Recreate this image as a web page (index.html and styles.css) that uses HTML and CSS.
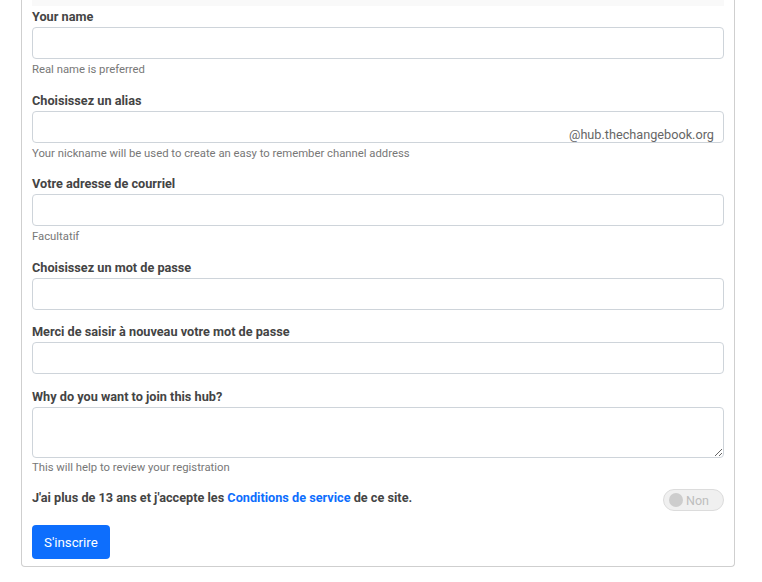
FILE: index.html
```html
<!DOCTYPE html>
<html lang="fr">
<head>
    <meta charset="UTF-8">
    <title>Inscription</title>
    <link rel="stylesheet" href="styles.css">
</head>
<body>
    <div class="container">
        <div class="section-band"></div>
        <form class="register">
            <div class="form-group">
                <label for="name">Your name</label>
                <input type="text" id="name">
                <div class="help">Real name is preferred</div>
            </div>

            <div class="form-group">
                <label for="nick">Choisissez un alias</label>
                <div class="input-wrap">
                    <input type="text" id="nick">
                    <span class="domain">@hub.thechangebook.org</span>
                </div>
                <div class="help">Your nickname will be used to create an easy to remember channel address</div>
            </div>

            <div class="form-group">
                <label for="email">Votre adresse de courriel</label>
                <input type="text" id="email">
                <div class="help">Facultatif</div>
            </div>

            <div class="form-group">
                <label for="pass1">Choisissez un mot de passe</label>
                <input type="password" id="pass1">
            </div>

            <div class="form-group">
                <label for="pass2">Merci de saisir à nouveau votre mot de passe</label>
                <input type="password" id="pass2">
            </div>

            <div class="form-group">
                <label for="why">Why do you want to join this hub?</label>
                <textarea id="why"></textarea>
                <div class="help help-last">This will help to review your registration</div>
            </div>

            <div class="tos">
                <span class="tos-text">J'ai plus de 13 ans et j'accepte les <a href="#">Conditions de service</a> de ce site.</span>
                <span class="toggle"><span class="knob"></span>Non</span>
            </div>

            <button type="button">S'inscrire</button>
        </form>
    </div>
</body>
</html>
```

FILE: styles.css
```css
body {
    font-family: Roboto, "Liberation Sans", sans-serif;
    background-color: #fff;
    margin: 0;
    padding: 0;
}

.container {
    width: 714px;
    margin: -1px 0 0 21px;
    box-sizing: border-box;
    background-color: #fff;
    border: 1px solid #cfcfcf;
    border-top: none;
    border-radius: 0 0 4px 4px;
    padding: 0 10px 7px 10px;
}

.section-band {
    height: 6px;
    margin-top: 1px;
    background-color: #f9f9f9;
}

.register {
    padding-top: 2px;
}

.form-group {
    margin-bottom: 13.5px;
}

label {
    display: block;
    font-size: 12.7px;
    font-weight: bold;
    line-height: 18px;
    color: #444;
    margin-bottom: 1px;
}

input[type="text"],
input[type="password"],
textarea {
    display: block;
    width: 100%;
    height: 32px;
    box-sizing: border-box;
    border: 1px solid #ced4da;
    border-radius: 4px;
    background-color: #fff;
    margin: 0;
    font-family: inherit;
}

textarea {
    height: 51px;
}

.input-wrap {
    position: relative;
}

.domain {
    position: absolute;
    right: 10px;
    bottom: 0;
    font-size: 12.7px;
    color: #666;
    line-height: 17px;
}

.help {
    font-size: 11.3px;
    line-height: 16px;
    color: #777;
    margin: 3px 0 1px;
}

.help-last {
    margin-top: 2px;
}

.tos {
    display: flex;
    justify-content: space-between;
    align-items: flex-start;
    margin-bottom: 14px;
}

.tos-text {
    font-size: 12.7px;
    font-weight: bold;
    line-height: 18px;
    color: #444;
}

.tos-text a {
    color: #0d6efd;
    text-decoration: none;
}

.toggle {
    display: flex;
    align-items: center;
    gap: 3px;
    width: 61px;
    height: 22px;
    box-sizing: border-box;
    padding-left: 5px;
    border: 1px solid #dcdcdc;
    border-radius: 11px;
    background-color: #f0f0f0;
    color: #bdbdbd;
    font-size: 12.5px;
}

.knob {
    width: 14px;
    height: 14px;
    border-radius: 50%;
    background-color: #cdcdcd;
}

button {
    display: block;
    padding: 0 12px;
    height: 34px;
    background-color: #0d6efd;
    color: #fff;
    font-family: inherit;
    font-size: 13.3px;
    border: none;
    border-radius: 4px;
    cursor: pointer;
}

button:hover {
    background-color: #0b5ed7;
}
```
